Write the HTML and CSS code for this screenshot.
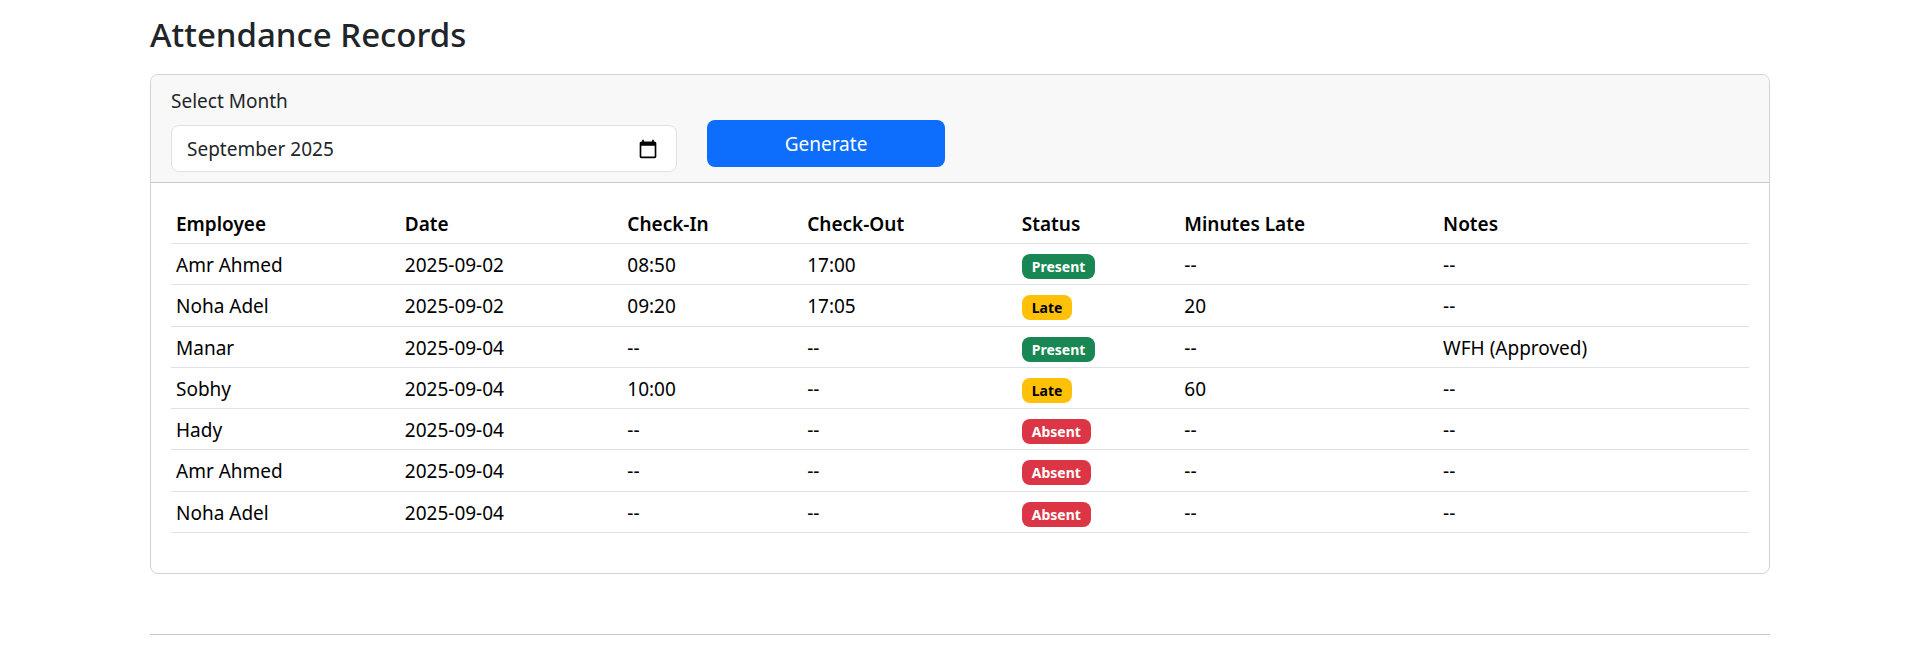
FILE: index.html
```html
<!DOCTYPE html>
<html lang="en-US">
<head>
<meta charset="utf-8">
<meta name="viewport" content="width=device-width, initial-scale=1">
<title>Attendance Records</title>
<link rel="stylesheet" href="styles.css">
</head>
<body>
<main class="container">
  <h1 class="title">Attendance Records</h1>
  <section class="card">
    <form class="card-header">
      <div class="field">
        <label class="field-label" for="month">Select Month</label>
        <div class="month-control">
          <input class="month-input" type="text" id="month" name="month" value="September 2025">
          <button class="month-picker" type="button" aria-label="Show month picker">
            <svg class="month-icon" viewBox="0 0 24 24" aria-hidden="true"><path d="M20 3h-1V1h-2v2H7V1H5v2H4c-1.100 0-2 .9-2 2v16c0 1.100.9 2 2 2h16c1.100 0 2-.9 2-2V5c0-1.100-.9-2-2-2zm0 18H4V8h16v13z"/></svg>
          </button>
        </div>
      </div>
      <button class="button" type="submit">Generate</button>
    </form>
    <div class="card-body">
      <table class="records">
        <colgroup>
          <col class="col-employee"><col class="col-date"><col class="col-in"><col class="col-out"><col class="col-status"><col class="col-late"><col>
        </colgroup>
        <thead>
          <tr><th>Employee</th><th>Date</th><th>Check-In</th><th>Check-Out</th><th>Status</th><th>Minutes Late</th><th>Notes</th></tr>
        </thead>
        <tbody>
          <tr><td>Amr Ahmed</td><td>2025-09-02</td><td>08:50</td><td>17:00</td><td><span class="badge present">Present</span></td><td>--</td><td>--</td></tr>
          <tr><td>Noha Adel</td><td>2025-09-02</td><td>09:20</td><td>17:05</td><td><span class="badge late">Late</span></td><td>20</td><td>--</td></tr>
          <tr><td>Manar</td><td>2025-09-04</td><td>--</td><td>--</td><td><span class="badge present">Present</span></td><td>--</td><td>WFH (Approved)</td></tr>
          <tr><td>Sobhy</td><td>2025-09-04</td><td>10:00</td><td>--</td><td><span class="badge late">Late</span></td><td>60</td><td>--</td></tr>
          <tr><td>Hady</td><td>2025-09-04</td><td>--</td><td>--</td><td><span class="badge absent">Absent</span></td><td>--</td><td>--</td></tr>
          <tr><td>Amr Ahmed</td><td>2025-09-04</td><td>--</td><td>--</td><td><span class="badge absent">Absent</span></td><td>--</td><td>--</td></tr>
          <tr><td>Noha Adel</td><td>2025-09-04</td><td>--</td><td>--</td><td><span class="badge absent">Absent</span></td><td>--</td><td>--</td></tr>
        </tbody>
      </table>
    </div>
  </section>
  <hr class="divider">
</main>
</body>
</html>
```
FILE: styles.css
```css
*, *::before, *::after { box-sizing: border-box; }

body {
  margin: 0;
  background: #fff;
  color: #212529;
  font: 400 19px/30px "Segoe UI", "Noto Sans", "Open Sans", sans-serif;
}

.container {
  max-width: 1620px;
  margin: 0 auto;
  padding-top: 14px;
}

.title {
  margin: 0 0 18px;
  font-size: 33px;
  font-weight: 500;
  line-height: 42px;
}

.card {
  border: 1px solid #d3d3d4;
  border-radius: 8px;
  background: #fff;
}

.card-header {
  display: grid;
  grid-template-columns: repeat(12, 1fr);
  gap: 30px;
  align-items: end;
  padding: 11px 20px 10px;
  border-bottom: 1px solid #c8c8c9;
  border-radius: 7px 7px 0 0;
  background: #f8f8f8;
}

.field { grid-column: span 4; }

.field-label {
  display: block;
  margin-bottom: 9px;
}

.month-control {
  display: flex;
  align-items: center;
  padding: 0 18px 0 15px;
  border: 1px solid #dee2e6;
  border-radius: 8px;
  background: #fff;
}

.month-input {
  flex: 1;
  min-width: 0;
  padding: 8px 0 7px;
  border: 0;
  outline: 0;
  background: transparent;
  color: #212529;
  font: inherit;
}

.month-picker {
  display: flex;
  padding: 0;
  border: 0;
  background: transparent;
  cursor: pointer;
}

.month-icon {
  width: 20px;
  height: 20px;
  fill: #000;
}

.button {
  grid-column: span 2;
  margin-bottom: 5px;
  padding: 9px 15px 8px;
  border: 0;
  border-radius: 8px;
  background: #0d6efd;
  color: #fff;
  font: inherit;
  cursor: pointer;
}

.card-body { padding: 20px; }

.records {
  width: 100%;
  height: 330px;
  margin-bottom: 20px;
  border-collapse: collapse;
  table-layout: fixed;
  color: #000;
}

.col-employee { width: 14.5%; }
.col-date { width: 14.1%; }
.col-in { width: 11.4%; }
.col-out { width: 13.6%; }
.col-status { width: 10.3%; }
.col-late { width: 16.4%; }

.records th,
.records td {
  padding: 6px 5px 4px;
  border-bottom: 1px solid #dee2e6;
  text-align: left;
  vertical-align: top;
}

.records th { font-weight: 650; }

.badge {
  display: inline-block;
  padding: 5px 10px;
  border-radius: 8px;
  font-size: 14px;
  font-weight: 700;
  line-height: 15px;
}

.present { background: #198754; color: #fff; }
.late { background: #ffc107; color: #000; }
.absent { background: #dc3545; color: #fff; }

.divider {
  margin: 60px 0 0;
  border: 0;
  border-top: 1px solid #c8c9ca;
}
```
